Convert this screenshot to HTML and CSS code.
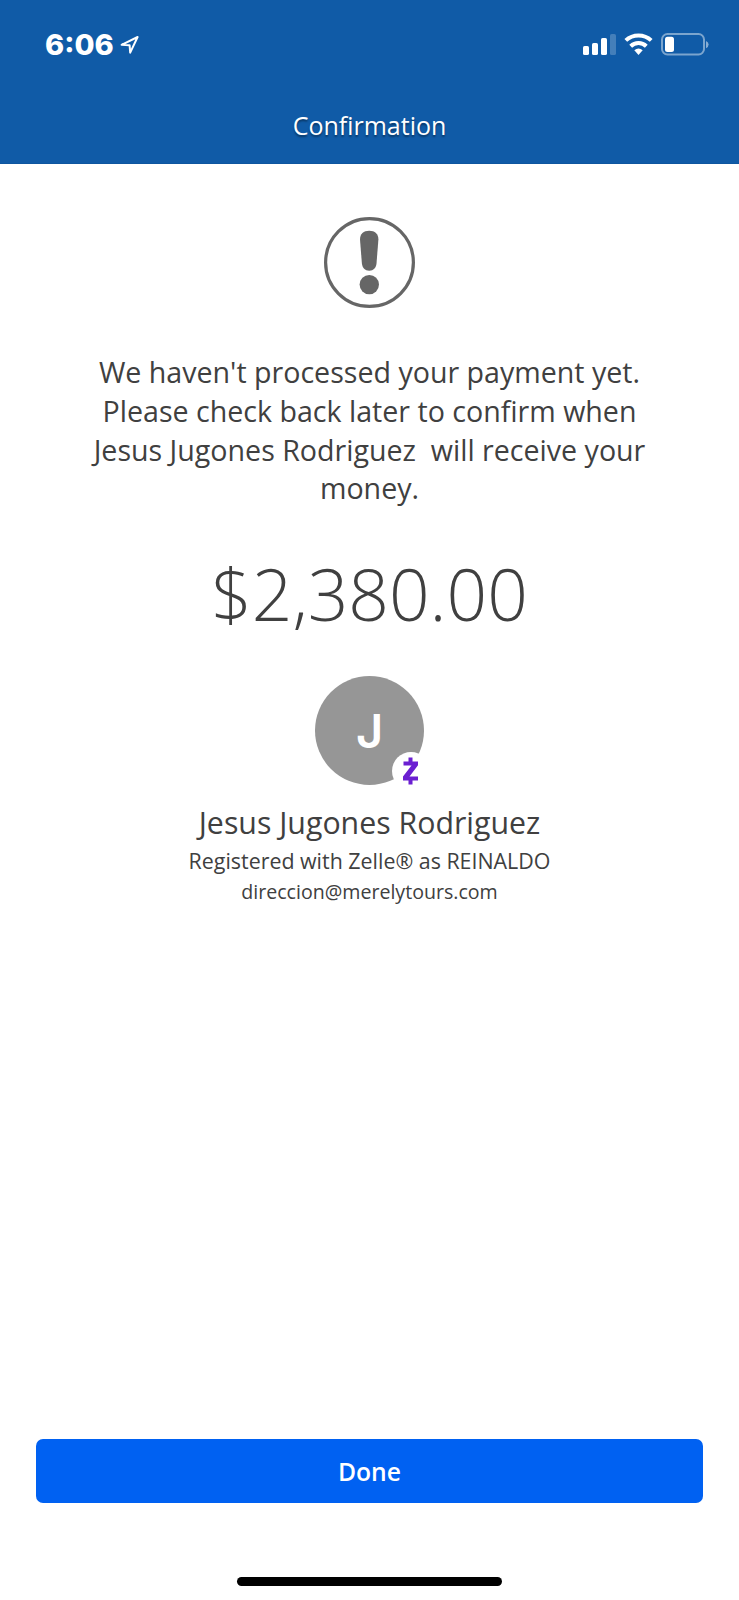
FILE: index.html
```
<!DOCTYPE html>
<html lang="en">
<head>
<meta charset="utf-8">
<title>Confirmation</title>
<link rel="stylesheet" href="styles.css">
</head>
<body>
<div class="screen">
  <header class="header">
    <div class="status">
      <div class="status-left">
        <span class="clock">6:06</span>
        <svg class="location" width="20" height="20" viewBox="0 0 20 20"><path d="M1.6 9.800 17.600 2 10.200 17.600 9.600 10.200Z" fill="none" stroke="#fff" stroke-width="2" stroke-linejoin="round"/></svg>
      </div>
      <svg class="status-icons" width="128" height="26" viewBox="0 0 128 26">
        <g fill="#fff">
          <rect x="1" y="14" width="6" height="9" rx="1.6"/>
          <rect x="10" y="11" width="6" height="12" rx="1.6"/>
          <rect x="19" y="6" width="6" height="17" rx="1.6"/>
          <rect x="28" y="2" width="6" height="21" rx="1.6" opacity=".22"/>
        </g>
        <g fill="none" stroke="#fff" stroke-width="4">
          <path d="M43.8 8.4a18.6 18.6 0 0 1 25.4 0"/>
          <path d="M48.7 14.2a11.2 11.2 0 0 1 15.6 0"/>
        </g>
        <path d="M52.3 18.3a6.6 6.6 0 0 1 8.4 0L56.5 23Z" fill="#fff"/>
        <rect x="80" y="2" width="42" height="20.5" rx="5.5" fill="none" stroke="#fff" stroke-opacity=".45" stroke-width="2"/>
        <rect x="83" y="4.7" width="9" height="15.3" rx="2.5" fill="#fff"/>
        <path d="M124 9v7.2q2.600-1 2.600-3.600t-2.600-3.600Z" fill="#fff" opacity=".5"/>
      </svg>
    </div>
    <h1 class="title">Confirmation</h1>
  </header>
  <main class="content">
    <svg class="alert" width="91" height="91" viewBox="0 0 91 91">
      <circle cx="45.500" cy="45.500" r="43.900" fill="none" stroke="#666" stroke-width="3.2"/>
      <path d="M36 22.500C36 17 39.500 13.700 45.200 13.700S54.400 17 54.400 22.500L52.500 46.500C52 51 49.500 53.700 45.200 53.700S38.400 51 37.900 46.500Z" fill="#666"/>
      <circle cx="45.300" cy="67.600" r="9.700" fill="#666"/>
    </svg>
    <p class="message">We haven't processed your payment yet.<br>Please check back later to confirm when<br>Jesus Jugones Rodriguez&nbsp; will receive your<br>money.</p>
    <p class="amount">$2,380.00</p>
    <div class="avatar">
      <span>J</span>
      <svg class="badge" width="38" height="38" viewBox="0 0 38 38">
        <circle cx="19" cy="19" r="19" fill="#fff"/>
        <path d="M11.500 9.500h5V5.500h4v4h5.500v3.800L17.500 24.500h8.500v4H20.500v4h-4v-4h-5.500v-4L19.500 13.500h-8Z" fill="#6b1fd1"/>
      </svg>
    </div>
    <p class="name">Jesus Jugones Rodriguez</p>
    <p class="registered">Registered with Zelle® as REINALDO</p>
    <p class="email">direccion@merelytours.com</p>
  </main>
  <footer class="footer">
    <button class="done" type="button">Done</button>
    <div class="home"></div>
  </footer>
</div>
</body>
</html>
```
FILE: styles.css
```
* { box-sizing: border-box; }
body { margin: 0; background: #fff; color: #404040; font-family: "Open Sans", sans-serif; }
p, h1 { margin: 0; white-space: nowrap; }
.screen { width: 739px; height: 1600px; display: flex; flex-direction: column; }
.header { height: 164px; background: #105ba7; color: #fff; border-bottom: 1px solid #0e569f; }
.status { height: 90px; padding: 0 29px 0 45px; display: flex; align-items: center; justify-content: space-between; }
.status-left { display: flex; align-items: center; gap: 6px; }
.clock { font: 800 29px/40px Inter, sans-serif; }
.title { font-size: 25px; line-height: 34px; font-weight: 400; text-align: center; padding-top: 18px; text-shadow: 0 2px 2px rgba(0,0,0,.4); }
.content { flex: 1; display: flex; flex-direction: column; align-items: center; }
.alert { margin-top: 53px; }
.message { margin-top: 45px; font-size: 28.6px; line-height: 38.8px; text-align: center; }
.amount { margin-top: 36.4px; font-size: 71.2px; line-height: 98px; font-weight: 300; }
.avatar { position: relative; margin-top: 33px; width: 109px; height: 109px; border-radius: 50%; background: #969696; color: #fff; display: flex; align-items: center; justify-content: center; font: 600 47px/1 Inter, sans-serif; }
.badge { position: absolute; left: 77px; top: 76px; }
.name { margin-top: 17px; font-size: 30.3px; line-height: 42px; }
.registered { font-size: 21.4px; line-height: 33px; }
.email { font-size: 19.6px; line-height: 29px; }
.footer { height: 161px; padding: 0 36px; display: flex; flex-direction: column; align-items: center; }
.done { width: 667px; height: 64px; padding: 1px 0 0; border: 0; border-radius: 7px; background: #0061f2; color: #fff; font: 600 24.7px/63px "Open Sans", sans-serif; }
.home { width: 265px; height: 9px; margin-top: 74px; border-radius: 5px; background: #000; }
```
